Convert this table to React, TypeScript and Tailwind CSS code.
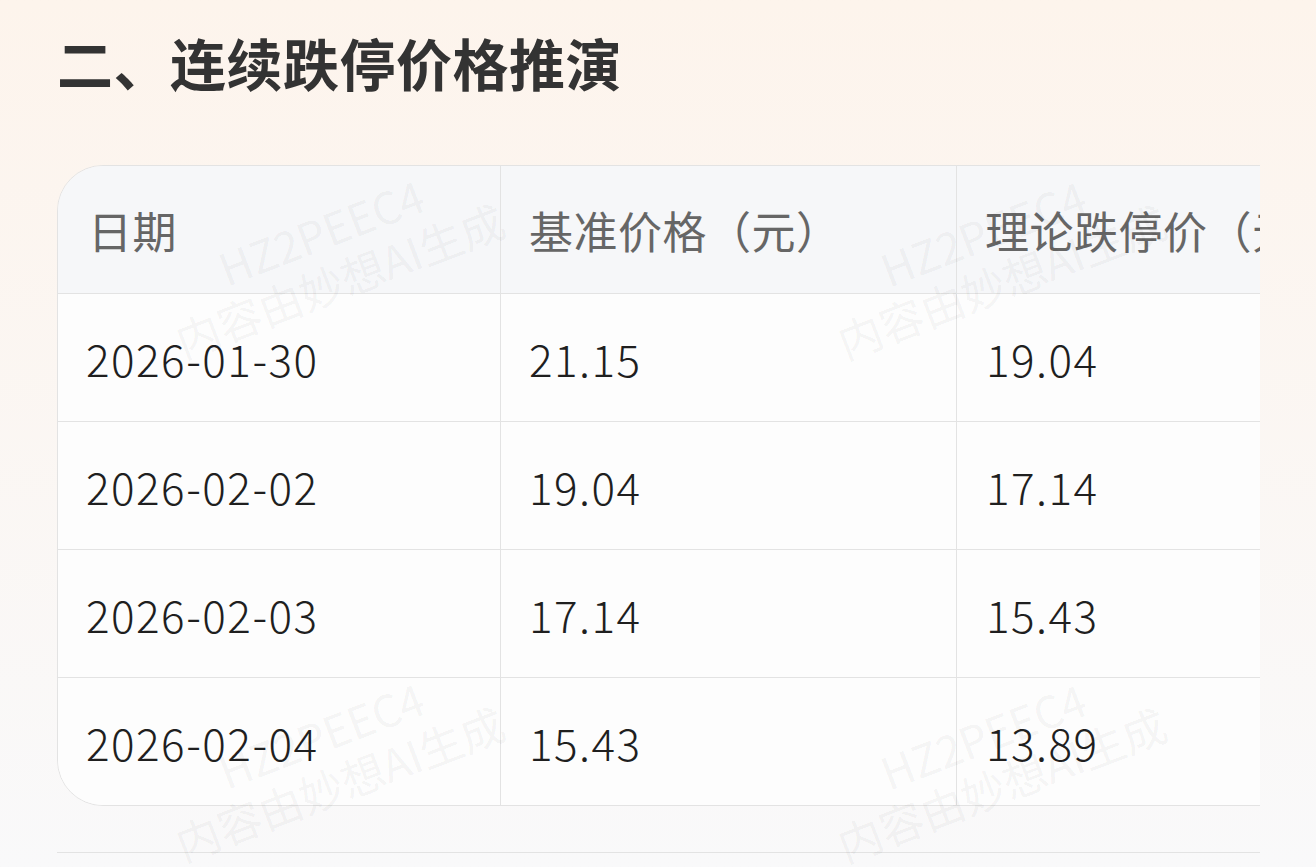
const rows = [
  { date: "2026-01-30", base: "21.15", limit: "19.04" },
  { date: "2026-02-02", base: "19.04", limit: "17.14" },
  { date: "2026-02-03", base: "17.14", limit: "15.43" },
  { date: "2026-02-04", base: "15.43", limit: "13.89" },
];

const marks = [
  { x: 330, y: 255 },
  { x: 992, y: 256 },
  { x: 330, y: 758 },
  { x: 992, y: 759 },
];

function Watermark({ x, y }: { x: number; y: number }) {
  return (
    <div
      className="pointer-events-none absolute flex -translate-x-1/2 -translate-y-1/2 -rotate-[21deg] flex-col items-center whitespace-nowrap text-[44px] leading-[52px] text-black/[0.05]"
      style={{ left: x, top: y }}
    >
      <span>HZ2PEEC4</span>
      <span>内容由妙想AI生成</span>
    </div>
  );
}

export default function App() {
  return (
    <div
      className="relative h-[867px] w-[1316px] overflow-hidden bg-gradient-to-b from-[#fdf4ec] to-[#f9f9fa] pl-[57px] pr-[56px]"
      style={{ fontFamily: '"Noto Sans CJK SC", "Noto Sans", sans-serif' }}
    >
      <h2 className="pt-[20px] text-[56px] font-bold leading-[84px] tracking-[0.5px] text-[#333]">
        二、连续跌停价格推演
      </h2>
      <div className="mt-[61px] overflow-hidden">
        <table className="w-[1356px] table-fixed border-separate border-spacing-0 overflow-hidden rounded-[46px] border border-[#e3e3e3] text-[44px]">
          <colgroup>
            <col className="w-[443px]" />
            <col className="w-[456px]" />
            <col className="w-[456px]" />
          </colgroup>
          <thead>
            <tr className="bg-[#f6f7f9] tracking-[0.5px] text-[#666]">
              <th className="h-[127px] whitespace-nowrap border-r border-[#e3e3e3] pl-[30px] text-left font-normal">日期</th>
              <th className="h-[127px] whitespace-nowrap border-r border-[#e3e3e3] pl-[28px] text-left font-normal">基准价格（元）</th>
              <th className="h-[127px] whitespace-nowrap pl-[28px] text-left font-normal">理论跌停价（元）</th>
            </tr>
          </thead>
          <tbody className="bg-[#fdfdfd] font-light tracking-[1.5px] text-[#1f1f1f]">
            {rows.map((r) => (
              <tr key={r.date}>
                <td className="h-[128px] border-r border-t border-[#e3e3e3] pl-[28px]">{r.date}</td>
                <td className="h-[128px] border-r border-t border-[#e3e3e3] pl-[28px]">{r.base}</td>
                <td className="h-[128px] border-t border-[#e3e3e3] pl-[29px]">{r.limit}</td>
              </tr>
            ))}
          </tbody>
        </table>
      </div>
      <div className="mt-[46px] h-px bg-[#e3e3e3]" />
      {marks.map((m, i) => (
        <Watermark key={i} x={m.x} y={m.y} />
      ))}
    </div>
  );
}
